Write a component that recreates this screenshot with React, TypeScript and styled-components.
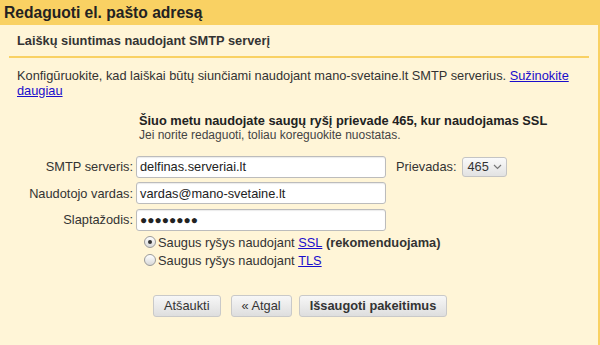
import React from 'react'
import styled, { createGlobalStyle } from 'styled-components'

const GlobalStyle = createGlobalStyle`
  html, body {
    margin: 0;
    padding: 0;
    background: #fff5d7;
  }
  body {
    font-family: 'Liberation Sans', Arial, sans-serif;
    color: #333333;
  }
`

const Page = styled.div`
  width: 600px;
  height: 345px;
  display: flex;
  flex-direction: column;
  overflow: hidden;
`

const Header = styled.div`
  height: 25px;
  flex: none;
  background: #f9d163;
  padding-left: 4px;
  display: flex;
  align-items: center;
  font-size: 15.6px;
  font-weight: bold;
  color: #222222;
`

const Panel = styled.div`
  flex: 1;
  background: #fff5d7;
  border-right: 2px solid #f9d163;
`

const SectionTitle = styled.div`
  margin: 0 9px;
  padding: 8px 8px 8px;
  border-bottom: 2px solid #f9d163;
  font-size: 12.8px;
  font-weight: bold;
  color: #333333;
`

const Intro = styled.p`
  margin: 0;
  padding: 10px 17px 0;
  font-size: 12.8px;
  line-height: 15px;
  color: #333333;
`

const Link = styled.a`
  color: #1a0dcc;
  text-decoration: underline;
  cursor: pointer;
`

const Notice = styled.div`
  margin: 15px 0 0 139px;
`

const NoticeTitle = styled.div`
  font-size: 12.8px;
  font-weight: bold;
  color: #222222;
  line-height: 15px;
`

const NoticeHint = styled.div`
  font-size: 12px;
  color: #444444;
  line-height: 14px;
`

const FormGrid = styled.div`
  margin-top: 13.5px;
  display: grid;
  grid-template-columns: 136px 250px auto;
  row-gap: 4.5px;
  align-items: center;
`

const Label = styled.label`
  font-size: 12.8px;
  color: #333333;
  text-align: right;
  padding-right: 3px;
`

const TextInput = styled.div`
  height: 22px;
  box-sizing: border-box;
  border: 1px solid #bcbcbc;
  border-radius: 3px;
  background: #ffffff;
  box-shadow: inset 0 1px 1px rgba(0, 0, 0, 0.08);
  padding: 0 3px;
  display: flex;
  align-items: center;
  font-size: 12.8px;
  color: #222222;
`

const Dots = styled.span`
  font-size: 12px;
  color: #222222;
`

const PortGroup = styled.div`
  display: flex;
  align-items: center;
  gap: 6px;
  padding-left: 10px;
  font-size: 12.8px;
  color: #333333;
`

const Select = styled.div`
  height: 20px;
  box-sizing: border-box;
  padding: 0 4px;
  border: 1px solid #c4c4c4;
  border-radius: 3px;
  background: linear-gradient(#fafafa, #e2e2e2);
  display: flex;
  align-items: center;
  gap: 4px;
  font-size: 12.8px;
  color: #333333;
`

const Options = styled.div`
  margin: 4px 0 0 144px;
  display: flex;
  flex-direction: column;
  gap: 3px;
`

const Option = styled.div`
  display: flex;
  align-items: center;
  font-size: 12.8px;
  color: #333333;
  line-height: 15px;
`

const Radio = styled.span<{ checked?: boolean }>`
  width: 12px;
  height: 12px;
  box-sizing: border-box;
  border-radius: 50%;
  border: 1px solid #9a9a9a;
  background: linear-gradient(#ffffff, #d8d8d8);
  margin-right: 2px;
  display: inline-flex;
  align-items: center;
  justify-content: center;
  &::after {
    content: '';
    width: 4px;
    height: 4px;
    border-radius: 50%;
    background: ${p => (p.checked ? '#333333' : 'transparent')};
  }
`

const Strong = styled.b`
  font-weight: bold;
  color: #333333;
`

const Actions = styled.div`
  margin: 27px 0 0 153px;
  display: flex;
  gap: 10px;
  & > :last-child {
    margin-left: -3px;
  }
`

const Button = styled.button<{ primary?: boolean }>`
  height: 22px;
  padding: 0 10px;
  border: 1px solid #c9c9c9;
  border-radius: 3px;
  background: linear-gradient(#f7f7f7, #dedede);
  font-family: 'Liberation Sans', Arial, sans-serif;
  font-size: 12.8px;
  font-weight: ${p => (p.primary ? 'bold' : 'normal')};
  color: #333333;
  cursor: pointer;
`

const Chevron = () => (
  <svg width="9" height="6" viewBox="0 0 9 6">
    <path d="M1 1 L4.5 4.5 L8 1" fill="none" stroke="#777" strokeWidth="1.2" />
  </svg>
)

export default function App() {
  return (
    <Page>
      <GlobalStyle />
      <Header>Redaguoti el. pašto adresą</Header>
      <Panel>
        <SectionTitle>Laiškų siuntimas naudojant SMTP serverį</SectionTitle>
        <Intro>
          Konfigūruokite, kad laiškai būtų siunčiami naudojant mano-svetaine.lt SMTP serverius.{' '}
          <Link>Sužinokite</Link> <Link>daugiau</Link>
        </Intro>
        <Notice>
          <NoticeTitle>Šiuo metu naudojate saugų ryšį prievade 465, kur naudojamas SSL</NoticeTitle>
          <NoticeHint>Jei norite redaguoti, toliau koreguokite nuostatas.</NoticeHint>
        </Notice>
        <FormGrid>
          <Label>SMTP serveris:</Label>
          <TextInput>delfinas.serveriai.lt</TextInput>
          <PortGroup>
            Prievadas:
            <Select>
              465
              <Chevron />
            </Select>
          </PortGroup>
          <Label>Naudotojo vardas:</Label>
          <TextInput>vardas@mano-svetaine.lt</TextInput>
          <span />
          <Label>Slaptažodis:</Label>
          <TextInput>
            <Dots>●●●●●●●●</Dots>
          </TextInput>
          <span />
        </FormGrid>
        <Options>
          <Option>
            <Radio checked />
            Saugus ryšys naudojant&nbsp;<Link>SSL</Link>&nbsp;<Strong>(rekomenduojama)</Strong>
          </Option>
          <Option>
            <Radio />
            Saugus ryšys naudojant&nbsp;<Link>TLS</Link>
          </Option>
        </Options>
        <Actions>
          <Button>Atšaukti</Button>
          <Button>« Atgal</Button>
          <Button primary>Išsaugoti pakeitimus</Button>
        </Actions>
      </Panel>
    </Page>
  )
}
